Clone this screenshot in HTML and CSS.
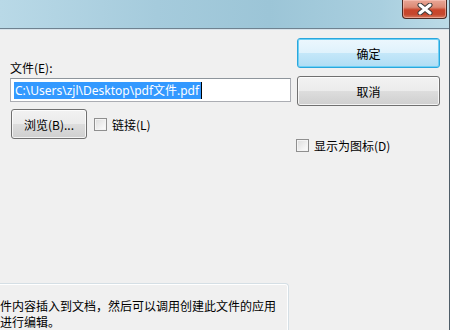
FILE: index.html
```html
<!DOCTYPE html>
<html lang="zh-CN">
<head>
<meta charset="utf-8">
<title>插入对象</title>
<link rel="stylesheet" href="styles.css">
</head>
<body>
<div class="window">
  <div class="titlebar">
    <div class="close-btn">
      <svg width="16" height="12" viewBox="0 0 16 12">
        <path d="M3 2 L13 10 M13 2 L3 10" stroke="#3a3a3a" stroke-width="5" stroke-linecap="round"/>
        <path d="M3 2 L13 10 M13 2 L3 10" stroke="#ffffff" stroke-width="3" stroke-linecap="round"/>
      </svg>
    </div>
  </div>
  <div class="client">
    <div class="left">
      <div class="file-area">
        <div class="label">文件(E):</div>
        <div class="textbox"><span class="sel">C:\Users\zjl\Desktop\pdf文件.pdf</span><span class="caret"></span></div>
        <div class="row">
          <div class="btn browse">浏览(B)...</div>
          <div class="check"><span class="box"></span><span>链接(L)</span></div>
        </div>
      </div>
      <div class="group">
        <p>件内容插入到文档，然后可以调用创建此文件的应用</p>
        <p>进行编辑。</p>
      </div>
    </div>
    <div class="right">
      <div class="btn ok">确定</div>
      <div class="btn cancel">取消</div>
      <div class="check icon-check"><span class="box"></span><span>显示为图标(D)</span></div>
    </div>
  </div>
</div>
</body>
</html>
```

FILE: styles.css
```css
html, body {
  margin: 0;
  padding: 0;
  width: 450px;
  height: 330px;
  overflow: hidden;
  background: #f0f0f0;
}

.window {
  width: 449px;
  height: 330px;
  border-right: 1px solid #4e5d68;
  display: flex;
  flex-direction: column;
  font-family: "Noto Sans", "Noto Sans CJK SC", sans-serif;
  font-size: 12px;
  color: #000;
}

.titlebar {
  height: 28px;
  flex: none;
  background: linear-gradient(to right, #b9d9e7 0%, #a5cbdc 35%, #9cc5d7 60%, #a9cfdf 85%, #bcdbe7 100%);
  border-bottom: 1px solid #6f8290;
  display: flex;
  justify-content: flex-end;
  padding-right: 2px;
}

.close-btn {
  width: 43px;
  height: 18px;
  border: 1px solid #4a2a24;
  border-top: none;
  border-radius: 0 0 4px 4px;
  background: linear-gradient(to bottom, #e9a797 0%, #dc8a75 40%, #c9452b 55%, #c5482e 80%, #d57a5e 100%);
  box-shadow: inset 0 0 0 1px rgba(255, 210, 200, 0.5);
  display: flex;
  align-items: center;
  justify-content: center;
}

.client {
  flex: 1;
  display: flex;
  border-top: 1px solid #d9e3ea;
  min-height: 0;
}

.left {
  width: 289px;
  display: flex;
  flex-direction: column;
}

.file-area {
  padding: 30px 0 0 10px;
}

.label {
  height: 16px;
  line-height: 16px;
  margin-bottom: 2px;
  font-family: "Noto Sans CJK SC", sans-serif;
}

.textbox {
  height: 22px;
  border: 1px solid #abadb3;
  border-top-color: #8e959c;
  background: #fff;
  display: flex;
  align-items: center;
  padding-left: 3px;
  box-sizing: content-box;
  width: 276px;
}

.sel {
  background: #3399ff;
  color: #fff;
  line-height: 17px;
  height: 17px;
  padding: 0 2px 0 1px;
  white-space: nowrap;
}

.caret {
  width: 1px;
  height: 17px;
  background: #000;
}

.row {
  display: flex;
  align-items: center;
  margin-top: 7px;
}

.btn {
  box-sizing: border-box;
  border: 1px solid #707070;
  border-radius: 3px;
  background: linear-gradient(to bottom, #f2f2f2 0%, #ebebeb 50%, #dddddd 51%, #cfcfcf 100%);
  box-shadow: inset 0 0 0 1px rgba(255, 255, 255, 0.75);
  display: flex;
  align-items: center;
  justify-content: center;
  font-family: "Noto Sans CJK SC", sans-serif;
  font-size: 12px;
}

.browse {
  width: 76px;
  height: 30px;
  margin-left: 1px;
}

.check {
  display: flex;
  align-items: center;
  gap: 5px;
  font-family: "Noto Sans CJK SC", sans-serif;
}

.row .check {
  margin-left: 7px;
}

.box {
  width: 11px;
  height: 11px;
  border: 1px solid #8f8f8f;
  background: linear-gradient(135deg, #dcdcdc 0%, #f4f4f4 70%, #fdfdfd 100%);
  box-shadow: inset 0 0 0 1px #f4f4f4;
}

.group {
  margin-top: 144px;
  border-top: 1px solid #d5dfe5;
  border-right: 1px solid #d5dfe5;
  border-top-right-radius: 4px;
  box-shadow: inset 0 1px 0 #fff, inset -1px 0 0 #fff;
  padding: 14px 0 0 0;
  flex: 1;
  font-family: "Noto Sans CJK SC", sans-serif;
}

.group p {
  margin: 0;
  line-height: 16px;
  white-space: nowrap;
}

.right {
  margin-left: 8px;
  width: 143px;
  padding-top: 8px;
  display: flex;
  flex-direction: column;
}

.ok,
.cancel {
  width: 143px;
  height: 30px;
}

.ok {
  border-color: #2aa7dd;
  background: linear-gradient(to bottom, #ecf7fd 0%, #dff2fc 50%, #c4e7f9 51%, #b0ddf4 100%);
  box-shadow: inset 0 0 0 1px #6fd0f5;
}

.cancel {
  margin-top: 8px;
}

.icon-check {
  margin-top: 31px;
  margin-left: -1px;
}
```
